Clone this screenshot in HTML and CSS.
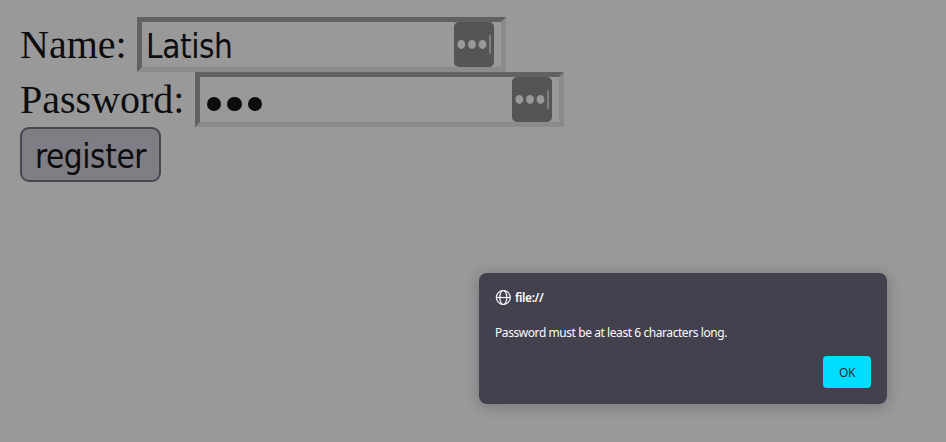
FILE: index.html
```html
<!DOCTYPE html>
<html lang="en">
<head>
<meta charset="utf-8">
<title>Register</title>
<link rel="stylesheet" href="styles.css">
</head>
<body>
<form class="form">
  <div class="row">
    <label class="label label-name">Name:</label>
    <div class="field">
      <span class="value">Latish</span>
      <svg class="manager" width="40" height="45" viewBox="0 0 40 45"><rect width="40" height="45" rx="5" fill="#555557"/><g fill="#99999a"><ellipse cx="7.3" cy="22.4" rx="3.9" ry="4.5"/><ellipse cx="18" cy="22.4" rx="3.9" ry="4.5"/><ellipse cx="28.5" cy="22.4" rx="3.9" ry="4.5"/><rect x="35.2" y="13" width="1.7" height="19" rx=".8" fill="#88888a"/></g></svg>
    </div>
  </div>
  <div class="row">
    <label class="label label-password">Password:</label>
    <div class="field">
      <span class="dots"><i></i><i></i><i></i></span>
      <svg class="manager" width="40" height="45" viewBox="0 0 40 45"><rect width="40" height="45" rx="5" fill="#555557"/><g fill="#99999a"><ellipse cx="7.3" cy="22.4" rx="3.9" ry="4.5"/><ellipse cx="18" cy="22.4" rx="3.9" ry="4.5"/><ellipse cx="28.5" cy="22.4" rx="3.9" ry="4.5"/><rect x="35.2" y="13" width="1.7" height="19" rx=".8" fill="#88888a"/></g></svg>
    </div>
  </div>
  <button class="register" type="button"><span class="register-text">register</span></button>
</form>
<div class="dialog" role="alertdialog">
  <div class="origin">
    <svg width="16" height="16" viewBox="0 0 16 16" fill="none" stroke="#fbfbfe" stroke-width="1.2"><circle cx="8.3" cy="7.5" r="7"/><ellipse cx="8.3" cy="7.5" rx="3.5" ry="7"/><path d="M1.3 7.5h14"/></svg>
    <span class="host">file://</span>
  </div>
  <p class="message"><span class="message-text">Password must be at least 6 characters long.</span></p>
  <div class="actions"><button class="ok" type="button">OK</button></div>
</div>
</body>
</html>
```
FILE: styles.css
```css
* { box-sizing: border-box; }
body {
  margin: 0;
  height: 442px;
  overflow: hidden;
  background: #99999a;
  color: #0d0d0f;
}
.form { padding: 17px 0 0 20px; }
.row { display: flex; height: 55px; }
.label {
  font: 40px/55px "Liberation Serif", serif;
  white-space: nowrap;
}
.label-name { width: 117px; }
.label-password { width: 175px; }
.field {
  display: flex;
  align-items: center;
  justify-content: space-between;
  width: 369px;
  height: 55px;
  padding: 0 7px 0 4px;
  border: 5px solid;
  border-color: #616162 #8b8b8c #8b8b8c #616162;
}
.value, .register-text {
  font: 33px/45px "DejaVu Sans Condensed", "Noto Sans", sans-serif;
}
.value { padding-top: 3px; letter-spacing: -0.4px; }
.dots { display: flex; gap: 6px; padding: 9px 0 0 3px; }
.dots i { width: 14.3px; height: 14.3px; border-radius: 50%; background: #0d0d0f; }
.register {
  display: flex;
  align-items: center;
  justify-content: center;
  width: 141px;
  height: 55px;
  padding: 4px 0 0;
  border: 2px solid #484652;
  border-radius: 9px;
  background: #7f7e85;
  color: #0d0d0f;
}
.register-text { letter-spacing: -0.4px; }
.dialog {
  position: absolute;
  left: 479px;
  top: 273px;
  width: 408px;
  height: 131px;
  padding: 16px;
  border-radius: 8px;
  background: #44414e;
  box-shadow: 0 2px 14px rgba(30, 30, 35, 0.3);
  color: #fbfbfe;
  font: 12px/16px "Noto Sans", "Open Sans", sans-serif;
}
.origin { display: flex; align-items: center; gap: 4px; height: 17px; }
.host { font-weight: 600; letter-spacing: -0.4px; }
.message { margin: 19px 0 14px; height: 17px; white-space: nowrap; }
.message-text { letter-spacing: -0.43px; }
.actions { display: flex; justify-content: flex-end; }
.ok {
  width: 48px;
  height: 32px;
  padding: 1px 0 0;
  border: 0;
  border-radius: 4px;
  background: #00ddff;
  color: #2b2a33;
  font: 12px/31px "Noto Sans", sans-serif;
  letter-spacing: -0.3px;
}
```
